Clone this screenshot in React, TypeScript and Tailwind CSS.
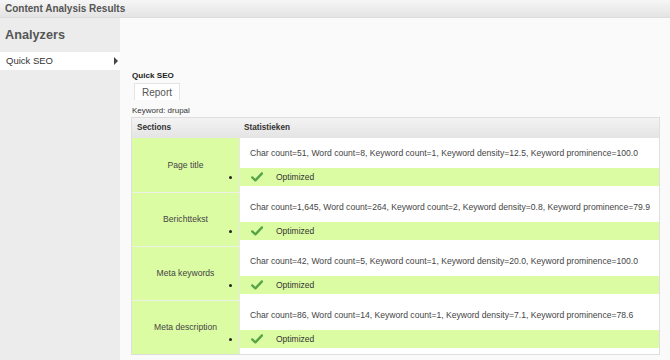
import React from "react";

const rows = [
  { name: "Page title", stats: "Char count=51, Word count=8, Keyword count=1, Keyword density=12.5, Keyword prominence=100.0" },
  { name: "Berichttekst", stats: "Char count=1,645, Word count=264, Keyword count=2, Keyword density=0.8, Keyword prominence=79.9" },
  { name: "Meta keywords", stats: "Char count=42, Word count=5, Keyword count=1, Keyword density=20.0, Keyword prominence=100.0" },
  { name: "Meta description", stats: "Char count=86, Word count=14, Keyword count=1, Keyword density=7.1, Keyword prominence=78.6" },
];

function Check() {
  return (
    <svg width="12" height="10" viewBox="0 0 12 10">
      <path d="M1.2 5.4 L4.4 8.4 L11 1.4" fill="none" stroke="#55a247" strokeWidth="2.3" strokeLinejoin="round" strokeLinecap="round" />
    </svg>
  );
}

export default function App() {
  return (
    <div className="w-[670px] h-[360px] overflow-hidden bg-[#fafafa] text-[#444]" style={{ fontFamily: '"Liberation Sans", Arial, sans-serif' }}>
      <div className="h-[18px] border-b border-[#dcdcdc] bg-gradient-to-b from-[#f6f6f6] to-[#e4e4e4] px-[5px] text-[10px] font-bold leading-[17px] text-[#555]">
        Content Analysis Results
      </div>
      <div className="flex h-[342px]">
        <div className="w-[120px] bg-[#ececec]">
          <div className="pl-[5px] pt-[10px] text-[12.7px] font-bold leading-[15px] text-[#555]">Analyzers</div>
          <div className="mt-[9px] flex h-[18px] items-center justify-between bg-white pl-[6px] pr-[2px] text-[9.5px] text-[#333]">
            <span>Quick SEO</span>
            <span className="h-0 w-0 border-y-[4px] border-l-[4px] border-y-transparent border-l-[#444]" />
          </div>
        </div>
        <div className="flex-1 pl-[12px] pt-[53px]">
          <div className="h-[10px] text-[8.1px] font-bold leading-[10px] text-[#222]">Quick SEO</div>
          <div className="ml-[2px] mt-[2px] h-[17px] w-fit border-x border-t border-[#e4e4e4] bg-white px-[7px] text-[10px] leading-[17px] text-[#555]">Report</div>
          <div className="h-[16px] text-[8px] leading-[21px] text-[#333]">Keyword: drupal</div>
          <div className="-ml-[1px] mt-[1px] w-[529px] border border-[#dedede] bg-white">
            <div className="flex h-[20px] items-center bg-gradient-to-b from-[#f3f3f3] to-[#e4e4e4] text-[8.2px] font-bold text-[#333]">
              <div className="w-[107px] pl-[5px]">Sections</div>
              <div className="pl-[5px]">Statistieken</div>
            </div>
            {rows.map((r, i) => (
              <div key={i} className="flex h-[54px]">
                <div className={`relative flex w-[107px] items-center justify-center bg-[#dcfca4] text-[8.6px] text-[#444] ${i > 0 ? "border-t border-[#eef2e6]" : ""}`}>
                  <span>{r.name}</span>
                  <span className={`absolute right-[7px] h-[3px] w-[3px] rounded-full bg-[#222] ${i > 0 ? "top-[37px]" : "top-[38px]"}`} />
                </div>
                <div className="flex flex-1 flex-col border-l border-[#e8e8e8]">
                  <div className="flex h-[30px] items-center pl-[10px] text-[8.6px] text-[#444]">{r.stats}</div>
                  <div className="flex h-[18px] items-center bg-[#dcfca4] pl-[11px] text-[8.5px] text-[#333]">
                    <Check />
                    <span className="ml-[13px]">Optimized</span>
                  </div>
                </div>
              </div>
            ))}
          </div>
        </div>
      </div>
    </div>
  );
}
